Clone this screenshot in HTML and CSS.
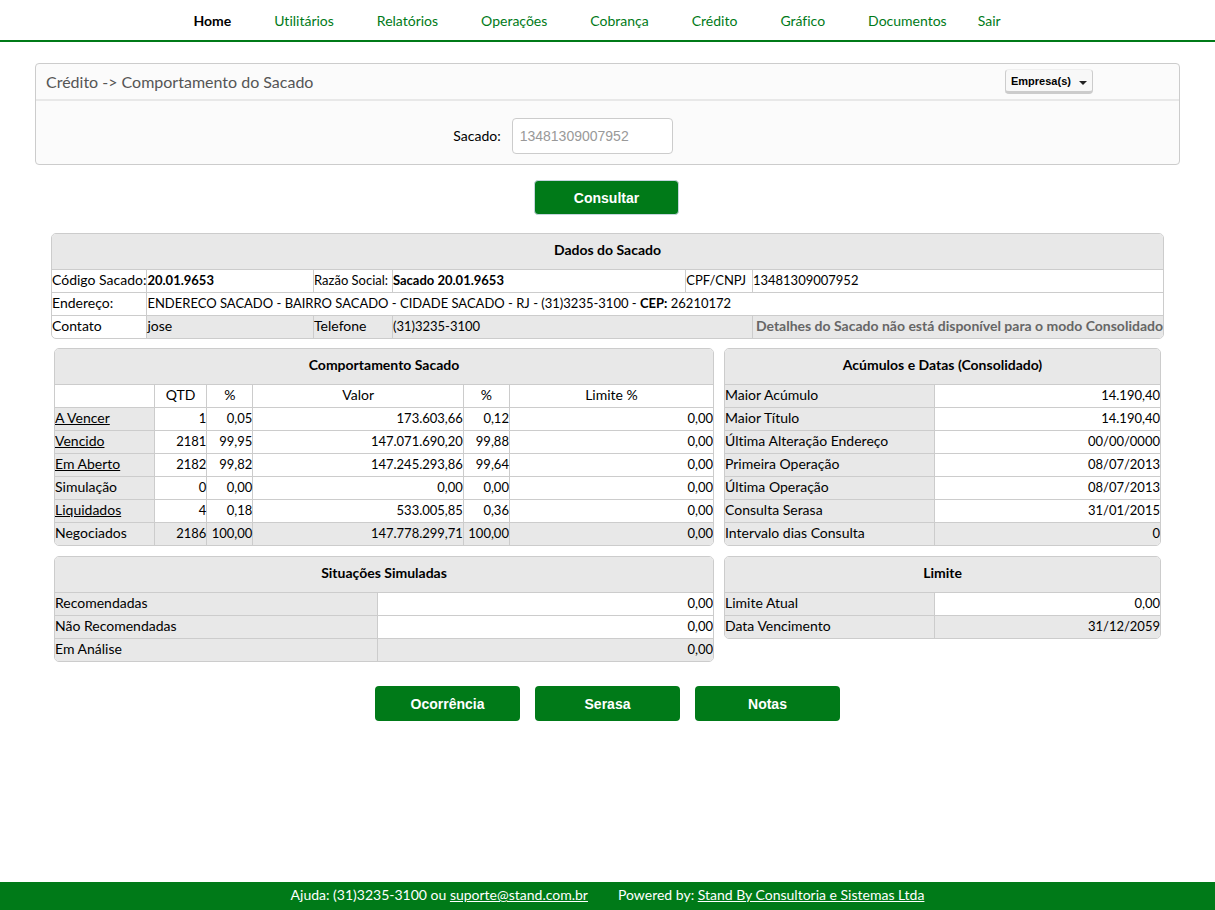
FILE: index.html
```html
<!DOCTYPE html>
<html lang="pt-br">
<head>
    <meta charset="UTF-8">
    <meta name="viewport" content="width=device-width, initial-scale=1.0">
    <title>Comportamento do Sacado</title>
    <link rel="stylesheet" href="styles.css">
</head>
<body>
    <nav class="menu">
        <a href="#" class="active">Home</a>
        <a href="#">Utilitários</a>
        <a href="#">Relatórios</a>
        <a href="#">Operações</a>
        <a href="#">Cobrança</a>
        <a href="#">Crédito</a>
        <a href="#">Gráfico</a>
        <a href="#">Documentos</a>
        <a href="#" class="sair">Sair</a>
    </nav>

    <main>
        <form id="consulta">
            <div class="panel">
                <div class="panel-title">
                    <h1>Crédito -&gt; Comportamento do Sacado</h1>
                    <div class="empresa">
                        <select aria-label="Empresa(s)">
                            <option>Empresa(s)</option>
                        </select>
                    </div>
                </div>
                <div class="panel-body">
                    <label for="sacado">Sacado:</label>
                    <input type="text" id="sacado" value="13481309007952">
                </div>
            </div>
            <div class="actions">
                <button type="submit" class="btn btn-consultar">Consultar</button>
            </div>
        </form>

        <div class="box dados">
            <table>
                <colgroup>
                    <col class="c-rotulo">
                    <col class="c-codigo">
                    <col class="c-razao">
                    <col class="c-nome">
                    <col class="c-cpf">
                    <col>
                </colgroup>
                <thead>
                    <tr><th colspan="6">Dados do Sacado</th></tr>
                </thead>
                <tbody>
                    <tr>
                        <td>Código Sacado:</td>
                        <td class="dado"><b>20.01.9653</b></td>
                        <td class="dado">Razão Social:</td>
                        <td class="dado"><b>Sacado 20.01.9653</b></td>
                        <td class="dado">CPF/CNPJ</td>
                        <td class="dado">13481309007952</td>
                    </tr>
                    <tr>
                        <td>Endereço:</td>
                        <td class="dado" colspan="5">ENDERECO SACADO - BAIRRO SACADO - CIDADE SACADO - RJ - (31)3235-3100 - <b>CEP:</b> 26210172</td>
                    </tr>
                    <tr>
                        <td>Contato</td>
                        <td class="gray">jose</td>
                        <td class="gray">Telefone</td>
                        <td class="gray dado" colspan="2">(31)3235-3100</td>
                        <td class="gray aviso">Detalhes do Sacado não está disponível para o modo Consolidado</td>
                    </tr>
                </tbody>
            </table>
        </div>

        <div class="grid">
            <div class="box">
                <table>
                    <colgroup>
                        <col class="c-tipo">
                        <col class="c-qtd">
                        <col class="c-perc">
                        <col class="c-valor">
                        <col class="c-perc">
                        <col>
                    </colgroup>
                    <thead>
                        <tr><th colspan="6">Comportamento Sacado</th></tr>
                        <tr class="sub">
                            <td></td>
                            <td>QTD</td>
                            <td>%</td>
                            <td>Valor</td>
                            <td>%</td>
                            <td>Limite %</td>
                        </tr>
                    </thead>
                    <tbody class="valores">
                        <tr><td><a href="#">A Vencer</a></td><td>1</td><td>0,05</td><td>173.603,66</td><td>0,12</td><td>0,00</td></tr>
                        <tr><td><a href="#">Vencido</a></td><td>2181</td><td>99,95</td><td>147.071.690,20</td><td>99,88</td><td>0,00</td></tr>
                        <tr><td><a href="#">Em Aberto</a></td><td>2182</td><td>99,82</td><td>147.245.293,86</td><td>99,64</td><td>0,00</td></tr>
                        <tr><td>Simulação</td><td>0</td><td>0,00</td><td>0,00</td><td>0,00</td><td>0,00</td></tr>
                        <tr><td><a href="#">Liquidados</a></td><td>4</td><td>0,18</td><td>533.005,85</td><td>0,36</td><td>0,00</td></tr>
                        <tr class="total"><td>Negociados</td><td>2186</td><td>100,00</td><td>147.778.299,71</td><td>100,00</td><td>0,00</td></tr>
                    </tbody>
                </table>
            </div>

            <div class="box">
                <table>
                    <colgroup>
                        <col class="c-data">
                        <col>
                    </colgroup>
                    <thead>
                        <tr><th colspan="2">Acúmulos e Datas (Consolidado)</th></tr>
                    </thead>
                    <tbody class="valores">
                        <tr><td>Maior Acúmulo</td><td>14.190,40</td></tr>
                        <tr><td>Maior Título</td><td>14.190,40</td></tr>
                        <tr><td>Última Alteração Endereço</td><td>00/00/0000</td></tr>
                        <tr><td>Primeira Operação</td><td>08/07/2013</td></tr>
                        <tr><td>Última Operação</td><td>08/07/2013</td></tr>
                        <tr><td>Consulta Serasa</td><td>31/01/2015</td></tr>
                        <tr class="total"><td>Intervalo dias Consulta</td><td>0</td></tr>
                    </tbody>
                </table>
            </div>

            <div class="box">
                <table>
                    <colgroup>
                        <col class="c-situacao">
                        <col>
                    </colgroup>
                    <thead>
                        <tr><th colspan="2">Situações Simuladas</th></tr>
                    </thead>
                    <tbody class="valores">
                        <tr><td>Recomendadas</td><td>0,00</td></tr>
                        <tr><td>Não Recomendadas</td><td>0,00</td></tr>
                        <tr class="total"><td>Em Análise</td><td>0,00</td></tr>
                    </tbody>
                </table>
            </div>

            <div class="box">
                <table>
                    <colgroup>
                        <col class="c-data">
                        <col>
                    </colgroup>
                    <thead>
                        <tr><th colspan="2">Limite</th></tr>
                    </thead>
                    <tbody class="valores">
                        <tr><td>Limite Atual</td><td>0,00</td></tr>
                        <tr class="total"><td>Data Vencimento</td><td>31/12/2059</td></tr>
                    </tbody>
                </table>
            </div>
        </div>

        <div class="actions actions-bottom">
            <button type="button" class="btn">Ocorrência</button>
            <button type="button" class="btn">Serasa</button>
            <button type="button" class="btn">Notas</button>
        </div>
    </main>

    <footer class="footer">
        <span>Ajuda: (31)3235-3100 ou <a href="mailto:suporte@stand.com.br">suporte@stand.com.br</a></span>
        <span>Powered by: <a href="#">Stand By Consultoria e Sistemas Ltda</a></span>
    </footer>
</body>
</html>
```
FILE: styles.css
```css
* {
    box-sizing: border-box;
}
body {
    margin: 0;
    min-height: 100vh;
    display: flex;
    flex-direction: column;
    font-family: Lato, "Open Sans", sans-serif;
    font-size: 14px;
    font-variant-ligatures: none;
    line-height: 22px;
    color: #000;
    background-color: #fff;
}
main {
    flex: 1;
    padding: 21px 35px;
}

/* menu */
.menu {
    display: flex;
    justify-content: center;
    gap: 43px;
    padding: 10px 21px 8px 0;
    border-bottom: 2px solid #007a18;
}
.menu a {
    color: #007a18;
    text-decoration: none;
}
.menu .active {
    color: #000;
    font-weight: bold;
}
.menu .sair {
    margin-left: -12px;
}

/* filtro */
.panel {
    border: 1px solid #ccc;
    border-radius: 4px;
    background-color: #fbfbfb;
}
.panel-title {
    display: flex;
    justify-content: space-between;
    align-items: center;
    height: 37px;
    padding: 0 86px 0 10px;
    border-bottom: 2px solid #e8e8e8;
}
.panel-title h1 {
    margin: 0;
    font-size: 16px;
    font-weight: normal;
    color: #555;
}
.empresa {
    position: relative;
}
.empresa select {
    display: block;
    appearance: none;
    width: 88px;
    height: 25px;
    padding: 0 5px;
    border: 1px solid #ccc;
    border-top-color: #eee;
    border-bottom-width: 3px;
    border-radius: 4px;
    background-color: #f8f8f8;
    font: bold 11px "Liberation Sans", Arial, sans-serif;
    color: #000;
}
.empresa::after {
    content: "";
    position: absolute;
    top: 12px;
    right: 6px;
    border: 4px solid transparent;
    border-top-color: #222;
    border-bottom: 0;
    pointer-events: none;
}
.panel-body {
    display: flex;
    justify-content: center;
    align-items: center;
    gap: 11px;
    padding: 17px 89px 10px 0;
}
.panel-body input {
    width: 161px;
    height: 36px;
    padding: 0 7px;
    border: 1px solid #ccc;
    border-radius: 4px;
    background-color: #fff;
    font: 14px "Liberation Sans", Arial, sans-serif;
    color: #999;
}

/* botoes */
.actions {
    display: flex;
    justify-content: center;
    gap: 15px;
    padding: 15px 2px 18px 0;
}
.actions-bottom {
    padding: 24px 0;
}
.btn {
    width: 145px;
    height: 35px;
    padding: 0;
    border: 0;
    border-radius: 4px;
    background-color: #007a18;
    font: bold 14px "Liberation Sans", Arial, sans-serif;
    color: #fff;
    cursor: pointer;
}
.btn-consultar {
    border: 1px solid #c5d5dd;
}

/* tabelas */
.box {
    overflow: hidden;
    border: 1px solid #ccc;
    border-radius: 5px;
}
.dados {
    margin: 0 16px 9px;
}
.grid {
    display: grid;
    grid-template-columns: 660fr 437fr;
    gap: 10px;
    align-items: start;
    margin: 0 19px;
}
table {
    width: 100%;
    table-layout: fixed;
    border-collapse: separate;
    border-spacing: 0;
    line-height: 20px;
}
th {
    height: 35px;
    padding: 0 0 4px;
    background-color: #e8e8e8;
}
td {
    height: 23px;
    padding: 0 0 2px;
    border-top: 1px solid #ccc;
    white-space: nowrap;
}
td + td {
    border-left: 1px solid #ccc;
}
.dado {
    font-size: 13px;
}
.sub {
    text-align: center;
}
.valores td {
    font-size: 13px;
    text-align: right;
}
.valores td:first-child {
    font-size: 14px;
    text-align: left;
}
.gray,
.valores td:first-child,
.total td {
    background-color: #e8e8e8;
}
.valores a {
    color: #000;
}
.aviso {
    font-weight: bold;
    text-align: right;
    color: #666;
}
.c-rotulo { width: 8.5%; }
.c-codigo { width: 15%; }
.c-razao { width: 7.1%; }
.c-nome { width: 26.4%; }
.c-cpf { width: 6%; }
.c-tipo { width: 15%; }
.c-qtd { width: 8%; }
.c-perc { width: 7%; }
.c-valor { width: 32%; }
.c-data { width: 48%; }
.c-situacao { width: 49%; }

/* rodape */
.footer {
    display: flex;
    justify-content: center;
    gap: 30px;
    padding: 2px 0 4px;
    background-color: #007a18;
    color: #fff;
}
.footer a {
    color: #fff;
}
```
